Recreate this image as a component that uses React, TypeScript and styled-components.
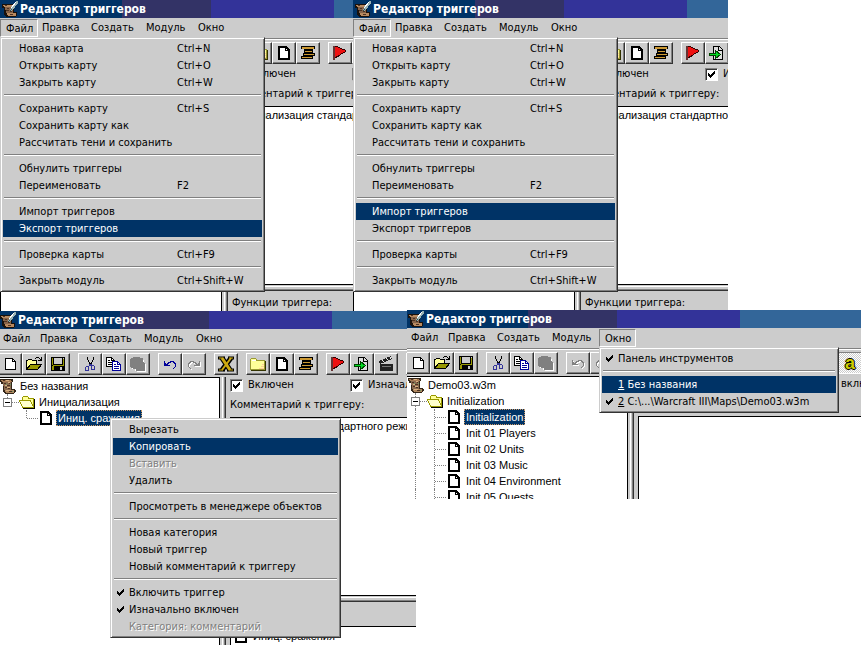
import React from "react";
import styled, { createGlobalStyle, css } from "styled-components";

const C = {
  face: "#cccccc",
  navy: "#003366",
  mid: "#808080",
  dark: "#333333",
  light: "#ffffff",
};
const UI = `"DejaVu Sans Condensed", "DejaVu Sans", sans-serif`;
const SANS = `"Liberation Sans", Arial, sans-serif`;

const Global = createGlobalStyle`
  *, *::before, *::after { box-sizing: border-box; }
  body { margin: 0; background: #fff; color: #000; font: 11px/16px ${UI}; }
  button, input, textarea { font: inherit; color: inherit; margin: 0; }
`;

const Desktop = styled.main`
  position: relative;
  min-height: 100vh;
  overflow: hidden;
`;

const Frame = styled.section<{ $x: number; $y: number; $w?: number; $h: number; $trim?: boolean }>`
  position: absolute;
  left: ${(p) => p.$x}px;
  top: ${(p) => p.$y}px;
  ${(p) => (p.$w ? `width: ${p.$w}px;` : "right: 0;")}
  height: ${(p) => p.$h}px;
  overflow: hidden;
  display: flex;
  flex-direction: column;
  background: ${C.face};
  ${(p) => p.$trim && "clip-path: inset(0 0 0 1px);"}
`;

const TitleBar = styled.header`
  flex: none;
  display: flex;
  align-items: center;
  gap: 2px;
  height: 18px;
  padding-left: 2px;
  color: #fff;
  background: linear-gradient(90deg, #003366 122px, #333366 122px 211px, #333399 211px 334px, #336699 334px);
`;
const TitleText = styled.h1`
  margin: 0;
  font: bold 12px/18px ${UI};
  white-space: nowrap;
`;

const MenuBar = styled.nav`
  flex: none;
  display: grid;
  grid-template-columns: 37px 49px 55px 52px auto;
  justify-content: start;
  height: 20px;
  padding-top: 1px;
`;
const MenuSlot = styled.div`
  position: relative;
  z-index: 2;
`;
const MenuButton = styled.button<{ $open?: boolean }>`
  height: 18px;
  padding: 0 5px 0 4px;
  border: 1px solid transparent;
  background: none;
  line-height: 16px;
  white-space: nowrap;
  ${(p) =>
    p.$open &&
    css`
      border-color: ${C.mid} ${C.light} ${C.light} ${C.mid};
      padding: 1px 4px 0 5px;
    `}
`;

const popupLook = css<{ $w: number }>`
  position: absolute;
  width: ${(p) => p.$w}px;
  padding: 2px;
  border: 1px solid;
  border-color: ${C.face} ${C.dark} ${C.dark} ${C.face};
  box-shadow: inset 1px 1px 0 ${C.light}, inset -1px -1px 0 ${C.mid};
  background: ${C.face};
`;
const DropDown = styled.div<{ $w: number }>`
  ${popupLook}
  top: 18px;
  left: 0;
`;
const ContextMenu = styled.div<{ $w: number; $x: number; $y: number }>`
  ${popupLook}
  left: ${(p) => p.$x}px;
  top: ${(p) => p.$y}px;
  z-index: 3;
`;
const MenuRow = styled.button<{ $hot?: boolean }>`
  display: grid;
  grid-template-columns: 16px 1fr auto;
  align-items: center;
  width: 100%;
  height: 17px;
  padding: 0;
  border: 0;
  text-align: left;
  white-space: nowrap;
  line-height: 16px;
  color: ${(p) => (p.$hot ? "#fff" : "#000")};
  background: ${(p) => (p.$hot ? C.navy : "transparent")};
  &:disabled {
    color: ${C.mid};
    text-shadow: 1px 1px 0 #fff;
  }
`;
const Shortcut = styled.span`
  width: 85px;
`;
const Separator = styled.hr`
  height: 2px;
  margin: 3px 1px 4px;
  border: 0;
  border-top: 1px solid ${C.mid};
  border-bottom: 1px solid ${C.light};
`;

const ToolBar = styled.div`
  flex: none;
  display: flex;
  gap: 8px;
  height: 28px;
  padding: 3px 0 2px;
  border-top: 1px solid ${C.mid};
  box-shadow: inset 0 1px 0 ${C.light};
`;
const ToolGroup = styled.div`
  flex: none;
  display: flex;
`;
const ToolButton = styled.button<{ $down?: boolean }>`
  display: grid;
  place-items: center;
  width: 24px;
  height: 22px;
  padding: 0;
  border: 1px solid;
  border-color: ${C.light} ${C.dark} ${C.dark} ${C.light};
  box-shadow: inset -1px -1px 0 ${C.mid};
  background: ${C.face};
  ${(p) =>
    p.$down &&
    css`
      border-color: ${C.mid} ${C.light} ${C.light} ${C.mid};
      box-shadow: none;
      background: repeating-conic-gradient(#fff 0 25%, ${C.face} 0 50%) 0 0 / 2px 2px;
    `}
`;
const LetterGlyph = styled.span`
  font: bold 18px/16px ${SANS};
  color: #cccc00;
  text-shadow: 1px 0 #000, -1px 0 #000, 0 1px #000, 0 -1px #000;
`;

const Body = styled.div`
  flex: 1;
  min-height: 0;
  display: flex;
`;
const TreePane = styled.ul`
  flex: none;
  width: 222px;
  margin: 0;
  padding: 0;
  list-style: none;
  border: 1px solid #000;
  border-bottom: 0;
  background: #fff;
  font: 11px/16px ${SANS};
`;
const TreeRow = styled.li`
  display: flex;
  align-items: center;
  height: 16px;
  padding-left: 1px;
  white-space: nowrap;
`;
const Guide = styled.span<{ $line?: boolean; $branch?: boolean; $last?: boolean }>`
  position: relative;
  flex: none;
  width: 19px;
  height: 16px;
  display: flex;
  align-items: center;
  padding-left: 3px;
  &::before {
    content: "";
    position: absolute;
    left: 7px;
    top: 0;
    height: ${(p) => (p.$last ? 8 : 16)}px;
    border-left: ${(p) => (p.$line ? `1px dotted ${C.mid}` : "0")};
  }
  &::after {
    content: "";
    position: absolute;
    left: 8px;
    right: 0;
    top: 8px;
    border-top: ${(p) => (p.$branch ? `1px dotted ${C.mid}` : "0")};
  }
`;
const Expander = styled.button`
  position: relative;
  z-index: 1;
  width: 9px;
  height: 9px;
  padding: 0;
  border: 1px solid ${C.mid};
  background: linear-gradient(#000, #000) center / 5px 1px no-repeat #fff;
`;
const TreeLabel = styled.span<{ $sel?: boolean }>`
  height: 16px;
  margin-left: 2px;
  padding: 0 1px;
  border: 1px solid transparent;
  line-height: 14px;
  ${(p) =>
    p.$sel &&
    css`
      color: #fff;
      background: ${C.navy};
      border: 1px dotted #cc9966;
    `}
`;

const Splitter = styled.div`
  flex: none;
  width: 6px;
  border-left: 2px solid ${C.face};
  border-right: 1px solid ${C.dark};
  box-shadow: inset 1px 0 0 ${C.light}, inset -1px 0 0 ${C.mid};
`;
const Details = styled.div`
  flex: 1;
  min-width: 0;
  display: flex;
  flex-direction: column;
`;
const Section = styled.div`
  flex: none;
  display: flex;
  flex-direction: column;
  padding-left: 4px;
`;
const Flags = styled.div`
  display: grid;
  grid-template-columns: 120px auto;
  height: 16px;
`;
const FlagLabel = styled.label`
  display: flex;
  align-items: center;
  gap: 5px;
  white-space: nowrap;
`;
const TickBox = styled.span`
  display: grid;
  width: 13px;
  height: 13px;
  & > * {
    grid-area: 1 / 1;
  }
  svg {
    margin: 3px;
    pointer-events: none;
  }
`;
const TickInput = styled.input`
  appearance: none;
  width: 13px;
  height: 13px;
  border: 1px solid;
  border-color: ${C.mid} ${C.light} ${C.light} ${C.mid};
  box-shadow: inset 1px 1px 0 ${C.dark};
  background: #fff;
`;
const FieldLabel = styled.label`
  height: 24px;
  line-height: 24px;
  white-space: nowrap;
`;
const Comment = styled.textarea`
  height: 179px;
  padding: 0;
  border: 1px solid #000;
  border-right: 0;
  background: #fff;
  font: 11px/16px ${SANS};
  white-space: pre;
  overflow: hidden;
  resize: none;
  outline: 0;
`;
const RowSplitter = styled.div`
  flex: none;
  height: 6px;
  border-top: 1px solid ${C.face};
  border-bottom: 1px solid ${C.dark};
  box-shadow: inset 0 1px 0 ${C.light}, inset 0 -1px 0 ${C.mid};
`;
const FuncTitle = styled.h2`
  margin: 0;
  height: 24px;
  font: 11px/24px ${UI};
  white-space: nowrap;
`;
const FuncList = styled.ul`
  height: 120px;
  margin: 0;
  padding: 1px;
  list-style: none;
  border: 1px solid #000;
  border-right: 0;
  background: #fff;
  font: 11px/16px ${SANS};
`;

/* ---------- icons ---------- */

const Svg = ({ children, w = 16, h = 16, soft }: { children: React.ReactNode; w?: number; h?: number; soft?: boolean }) => (
  <svg
    width={w}
    height={h}
    viewBox={`0 0 ${w} ${h}`}
    fill="none"
    shapeRendering={soft ? "auto" : "crispEdges"}
    aria-hidden="true"
  >
    {children}
  </svg>
);

const Check = () => (
  <Svg w={7} h={7}>
    <path d="M0 2h1v1h1v1h1v-1h1v-1h1v-1h1v-1h1v3h-1v1h-1v1h-1v1h-1v1h-1v-1h-1v-1h-1z" fill="currentColor" />
  </Svg>
);

const MenuTick = styled.span`
  padding-left: 4px;
  display: flex;
`;

const IconScroll = () => (
  <Svg>
    <path d="M0 1h13v3h-1v7h3l1 2-2 3H5l-2-2V6H1z" fill="#332619" />
    <path d="M1 2h10l1 2H2z" fill="#a87b55" />
    <path d="M3 4h8v8H4z" fill="#8a6a50" />
    <path d="M5 12h9v2l-1 1H6z" fill="#b08860" />
    <path d="M4 5h2v1H4zM7 7h3v1H7zM5 9h2v1H5zM9 5h1v1H9zM8 10h2v1H8zM3 2h2v1H3zM9 13h3v1H9z" fill="#4d3322" />
    <path d="M5 7h2v1H5zM8 4h2v1H8zM7 9h3v1H7zM6 12h4v1H6zM6 2h3v1H6z" fill="#d9b080" />
    <path d="M10 6h1v1h-1zM6 6h1v1H6zM12 13h1v1h-1z" fill="#669966" />
  </Svg>
);
const IconScrollPen = () => (
  <Svg>
    <path d="M0 3h12v8h3v3l-2 2H4l-2-2V7H0z" fill="#1a120c" />
    <path d="M1 4h9v2H2z" fill="#b88a60" />
    <path d="M3 6h8v6H4z" fill="#86644a" />
    <path d="M5 12h9v2l-1 1H6z" fill="#b88a60" />
    <path d="M5 7h2v1H5zM4 9h3v1H4zM8 10h2v1H8zM3 4h2v1H3zM8 13h3v1H8z" fill="#4d3322" />
    <path d="M14 0h2v2l-3 4-4 4H8l1-4z" fill="#99b3b3" />
    <path d="M14 1l-5 6" stroke="#fff" />
    <path d="M10 8l-2 2" stroke="#334d4d" />
  </Svg>
);
const IconNew = () => (
  <Svg>
    <path d="M3.5 2.5h7l3 3v8h-10z" fill="#fff" stroke="#000" />
    <path d="M10.5 2.5v3h3" stroke="#000" />
  </Svg>
);
const IconTrigger = () => (
  <Svg>
    <path d="M3 2h7l3 3v9H3z" fill="#fff" stroke="#000" strokeWidth="2" />
    <path d="M9.5 2v3.500H13" stroke="#000" />
  </Svg>
);
const IconOpen = () => (
  <Svg>
    <path d="M0.5 13.5v-9h1l1-1h3l1 1h4v3" fill="#ffff99" stroke="#000" />
    <path d="M0.5 13.5l4-5h11l-4 5z" fill="#999900" stroke="#000" />
    <path d="M9 2h1v-1h3v1h1v1h1v-2h1v4h-4v-1h2v-1h-1v-1h-3v1H9z" fill="#000" />
  </Svg>
);
const IconSave = () => (
  <Svg>
    <path d="M1 1h14v14H1z" fill="#000" />
    <path d="M2 2h1v7h-1zM3 9h11v1H3zM13 3h1v6h-1z" fill="#999900" />
    <path d="M4 2h8v6H4z" fill="#ccc" />
    <path d="M13 2h1v1h-1zM10 11h2v3h-2z" fill="#ccc" />
    <path d="M2 10h2v4H2z" fill="#999900" />
  </Svg>
);
const IconCut = () => (
  <Svg>
    <path d="M5 1h1v3h1v2h1v1h1V6h1V4h1V1h1v3h-1v2h-1v2H9v1H8V8H7V6H6V4H5z" fill="#000" />
    <path d="M7 8h3v2H7z" fill="#333399" />
    <path d="M4.500 10.500h2v4h-3v-3zM9.500 9.500h2l1 1v3h-3z" stroke="#333399" />
  </Svg>
);
const IconCopy = () => (
  <Svg>
    <path d="M0.500 1.500h5l3 3v6h-8z" fill="#fff" stroke="#000" />
    <path d="M5.500 1.500v3h3M2 4.500h2M2 6.500h4M2 8.500h4" stroke="#000" />
    <path d="M6.500 5.500h5l3 3v6h-8z" fill="#fff" stroke="#000099" />
    <path d="M11.500 5.500v3h3M8 8.500h2M8 10.500h5M8 12.500h5" stroke="#000099" />
  </Svg>
);
const IconPaste = () => (
  <Svg>
    <path d="M3 3h9v1h2v4h2v8H7v-1H5v-2H2V9H1V5h2z" fill="#fff" />
    <path d="M1 2h2V1h7v1h3v4h1v1h1v8H6v-2H3v-1H1v-1H0V3h1z" fill="#808080" />
  </Svg>
);
const ARC = "M2 5h1v2h1v1h1V7h1V6h2V5h4v1h1v1h1v4h-1v1h-1v1h-1v-1h1v-1h1V8h-1V7h-1V6H9v1H7v1H6v1h2v1H2z";
const Arc = ({ c, flip, off }: { c: string; flip?: boolean; off?: boolean }) => (
  <Svg>
    <g transform={flip ? "translate(16 0) scale(-1 1)" : undefined}>
      {off && <path d={ARC} fill="#fff" transform={flip ? "translate(-1 1)" : "translate(1 1)"} />}
      <path d={ARC} fill={c} />
    </g>
  </Svg>
);
const IconVar = () => (
  <Svg soft>
    <path d="M4 2l8 12M13 2L4 14" stroke="#000" strokeWidth="5" />
    <path d="M0 2h7M10 2h6M0 14h7M9 14h7" stroke="#000" strokeWidth="3" />
    <path d="M4 2l8 12" stroke="#ccaa11" strokeWidth="3" />
    <path d="M13 2L4 14" stroke="#ccaa11" strokeWidth="2" />
    <path d="M1 2h4M11 2h4M1 14h4M11 14h4" stroke="#ccaa11" />
  </Svg>
);
const IconFolder = () => (
  <Svg>
    <path d="M0.500 13.500v-10l1-1h4l1 1v1h8v9z" fill="#ffff99" stroke="#999933" />
    <path d="M1 14.500h14.500V5" stroke="#333300" />
    <path d="M2 4.500h4" stroke="#fff" />
    <path d="M9 12.500h5M11 10.500h3M12 8.500h2" stroke="#ffcc99" />
  </Svg>
);
const IconFolderOpen = () => (
  <Svg>
    <path d="M3.500 13.500v-10l1-1h4l1 1v1h5v9z" fill="#ffff99" stroke="#999900" />
    <path d="M0.500 6.500h11l3 7h-11z" fill="#ffffcc" stroke="#999900" />
    <path d="M4 14.500h11.500V5" stroke="#000" />
  </Svg>
);
const IconComment = () => (
  <Svg>
    <path d="M1 1h14v4H1zM4 5h9v3H4zM1 11h12v3H1zM3 8h12v3H3z" fill="#000" />
    <path d="M2 2h12v2H2zM5 6h7v1H5zM4 9h10v1H4zM2 12h10v1H2z" fill="#cc9933" />
    <path d="M1 4h3v1H1zM13 4h2v1h-2z" fill="#ccc" />
  </Svg>
);
const IconFlag = () => (
  <Svg>
    <path d="M1.500 1v14M2.500 1v14" stroke="#663333" />
    <path d="M3 1h2l4 2 5 2v1l-4 2-4 3-3 1z" fill="#ee1111" />
    <path d="M3 1.500h2l4 2 5 2M14 6.500l-4 2-4 3-3 1" stroke="#330000" />
  </Svg>
);
const IconImport = () => (
  <Svg>
    <path d="M4.500 1.500h6l3 3v10h-9z" fill="#ddd" stroke="#000" />
    <path d="M9.500 2v3.500h4" stroke="#000" />
    <path d="M0.500 8.500h6v-3l5 4-5 4v-3h-6z" fill="#00dd22" stroke="#004400" />
  </Svg>
);
const IconClap = () => (
  <Svg>
    <path d="M2 8h13v7H2z" fill="#222" />
    <path d="M1 5l12-5 1 3L2 8z" fill="#222" />
    <path d="M4 4l2 2M8 2l2 2M12 1l1 2" stroke="#eee" />
    <path d="M4 10h9" stroke="#777" />
  </Svg>
);

/* ---------- composition ---------- */

type Entry = "-" | { t: string; k?: string; hot?: boolean; off?: boolean; on?: boolean; key1?: string };

const Entries = ({ items }: { items: Entry[] }) => (
  <>
    {items.map((it, i) =>
      it === "-" ? (
        <Separator key={i} />
      ) : (
        <MenuRow key={i} $hot={it.hot} disabled={it.off}>
          <MenuTick>{it.on && <Check />}</MenuTick>
          <span>
            {it.key1 && <u>{it.key1}</u>}
            {it.t}
          </span>
          {it.k && <Shortcut>{it.k}</Shortcut>}
        </MenuRow>
      )
    )}
  </>
);

const fileMenu = (hot: string): Entry[] => {
  const list: Entry[] = [
    { t: "Новая карта", k: "Ctrl+N" },
    { t: "Открыть карту", k: "Ctrl+O" },
    { t: "Закрыть карту", k: "Ctrl+W" },
    "-",
    { t: "Сохранить карту", k: "Ctrl+S" },
    { t: "Сохранить карту как" },
    { t: "Рассчитать тени и сохранить" },
    "-",
    { t: "Обнулить триггеры" },
    { t: "Переименовать", k: "F2" },
    "-",
    { t: "Импорт триггеров" },
    { t: "Экспорт триггеров" },
    "-",
    { t: "Проверка карты", k: "Ctrl+F9" },
    "-",
    { t: "Закрыть модуль", k: "Ctrl+Shift+W" },
  ];
  return list.map((e) => (e !== "-" && e.t === hot ? { ...e, hot: true } : e));
};

const windowMenu: Entry[] = [
  { t: "Панель инструментов", on: true },
  "-",
  { key1: "1", t: " Без названия", hot: true },
  { key1: "2", t: " C:\\...\\Warcraft III\\Maps\\Demo03.w3m", on: true },
];

const contextMenu: Entry[] = [
  { t: "Вырезать" },
  { t: "Копировать", hot: true },
  { t: "Вставить", off: true },
  { t: "Удалить" },
  "-",
  { t: "Просмотреть в менеджере объектов" },
  "-",
  { t: "Новая категория" },
  { t: "Новый триггер" },
  { t: "Новый комментарий к триггеру" },
  "-",
  { t: "Включить триггер", on: true },
  { t: "Изначально включен", on: true },
  { t: "Категория: комментарий", off: true },
];

const toolGroups = (undoOff: boolean): [string, React.ReactNode][][] => [
  [["Новая карта", <IconNew />], ["Открыть карту", <IconOpen />], ["Сохранить карту", <IconSave />]],
  [["Вырезать", <IconCut />], ["Копировать", <IconCopy />], ["Вставить", <IconPaste />]],
  [["Отменить", <Arc c={undoOff ? "#808080" : "#000099"} off={undoOff} />], ["Вернуть", <Arc c="#808080" flip off />]],
  [["Переменные", <IconVar />]],
  [["Новая категория", <IconFolder />], ["Новый триггер", <IconTrigger />], ["Новый комментарий", <IconComment />]],
  [["Новое событие", <IconFlag />], ["Новое условие", <IconImport />], ["Новое действие", <IconClap />]],
];

const MENUS = ["Файл", "Правка", "Создать", "Модуль", "Окно"];

interface EditorProps {
  id: string;
  x: number;
  y: number;
  w?: number;
  h: number;
  trim?: boolean;
  open?: string;
  popup?: Entry[];
  popupWidth?: number;
  undoOff?: boolean;
  comment?: string;
  tree?: React.ReactNode;
  functions?: React.ReactNode;
  children?: React.ReactNode;
}

const Flag = ({ text }: { text: string }) => (
  <FlagLabel>
    <TickBox>
      <TickInput type="checkbox" defaultChecked />
      <Check />
    </TickBox>
    {text}
  </FlagLabel>
);

const Editor = (p: EditorProps) => (
  <Frame $x={p.x} $y={p.y} $w={p.w} $h={p.h} $trim={p.trim}>
    <TitleBar>
      <IconScrollPen />
      <TitleText>Редактор триггеров</TitleText>
    </TitleBar>
    <MenuBar>
      {MENUS.map((m) => (
        <MenuSlot key={m}>
          <MenuButton $open={m === p.open}>{m}</MenuButton>
          {m === p.open && p.popup && (
            <DropDown $w={p.popupWidth ?? 265}>
              <Entries items={p.popup} />
            </DropDown>
          )}
        </MenuSlot>
      ))}
    </MenuBar>
    <ToolBar>
      {toolGroups(!!p.undoOff).map((g, i) => (
        <ToolGroup key={i}>
          {g.map(([name, icon]) => (
            <ToolButton key={name} aria-label={name}>
              {icon}
            </ToolButton>
          ))}
        </ToolGroup>
      ))}
      <ToolGroup>
        <ToolButton aria-label="Проверка карты" />
        <ToolButton $down>
          <LetterGlyph>a</LetterGlyph>
        </ToolButton>
      </ToolGroup>
    </ToolBar>
    <Body>
      <TreePane>{p.tree}</TreePane>
      <Splitter />
      <Details>
        <Section>
          <Flags>
            <Flag text="Включен" />
            <Flag text="Изначально включен" />
          </Flags>
          <FieldLabel htmlFor={p.id}>Комментарий к триггеру:</FieldLabel>
          <Comment id={p.id} defaultValue={p.comment} spellCheck={false} />
        </Section>
        <RowSplitter />
        <Section>
          <FuncTitle>Функции триггера:</FuncTitle>
          <FuncList>{p.functions}</FuncList>
        </Section>
      </Details>
    </Body>
    {p.children}
  </Frame>
);

const NOTE = "Инициализация стандартного режима";
const TRIGGERS = ["Initialization", "Init 01 Players", "Init 02 Units", "Init 03 Music", "Init 04 Environment", "Init 05 Quests"];

export default function App() {
  return (
    <>
      <Global />
      <Desktop>
        <Editor id="c1" x={0} y={0} w={353} h={311} open="Файл" popup={fileMenu("Экспорт триггеров")} comment={NOTE} />
        <Editor id="c2" x={353} y={0} w={375} h={311} open="Файл" popup={fileMenu("Импорт триггеров")} comment={NOTE} />
        <Editor
          id="c3"
          x={-2}
          y={311}
          w={418}
          h={334}
          comment={NOTE}
          tree={
            <>
              <TreeRow>
                <IconScroll />
                <TreeLabel>Без названия</TreeLabel>
              </TreeRow>
              <TreeRow>
                <Guide $line $branch $last>
                  <Expander aria-label="Свернуть" />
                </Guide>
                <IconFolderOpen />
                <TreeLabel>Инициализация</TreeLabel>
              </TreeRow>
              <TreeRow>
                <Guide />
                <Guide $line $branch $last />
                <IconTrigger />
                <TreeLabel $sel>Иниц. сражения</TreeLabel>
              </TreeRow>
            </>
          }
          functions={
            <TreeRow>
              <IconTrigger />
              <TreeLabel>Иниц. сражения</TreeLabel>
            </TreeRow>
          }
        >
          <ContextMenu $w={231} $x={112} $y={107}>
            <Entries items={contextMenu} />
          </ContextMenu>
        </Editor>
        <Editor
          id="c4"
          x={406}
          y={310}
          h={189}
          trim
          open="Окно"
          popup={windowMenu}
          popupWidth={240}
          undoOff
          tree={
            <>
              <TreeRow>
                <IconScroll />
                <TreeLabel>Demo03.w3m</TreeLabel>
              </TreeRow>
              <TreeRow>
                <Guide $line $branch>
                  <Expander aria-label="Свернуть" />
                </Guide>
                <IconFolderOpen />
                <TreeLabel>Initialization</TreeLabel>
              </TreeRow>
              {TRIGGERS.map((t, i) => (
                <TreeRow key={t}>
                  <Guide $line />
                  <Guide $line $branch />
                  <IconTrigger />
                  <TreeLabel $sel={i === 0}>{t}</TreeLabel>
                </TreeRow>
              ))}
            </>
          }
        />
      </Desktop>
    </>
  );
}
